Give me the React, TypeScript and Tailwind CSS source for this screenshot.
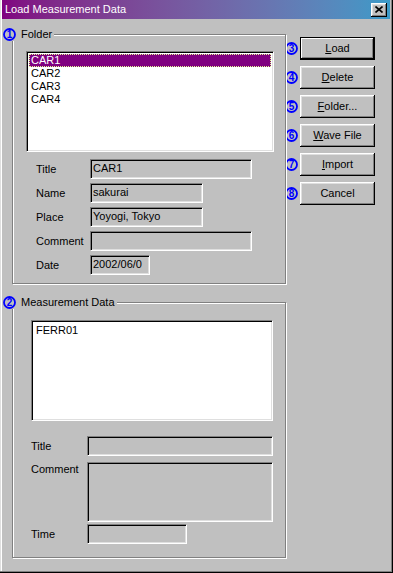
import React from "react"

const sunken =
  "border border-t-[#808080] border-l-[#808080] border-r-white border-b-white shadow-[inset_1px_1px_0_#000,inset_-1px_-1px_0_#dfdfdf]"

const raised =
  "shadow-[inset_-1px_-1px_0_#000,inset_1px_1px_0_#fff,inset_-2px_-2px_0_#808080,inset_2px_2px_0_#dfdfdf]"

function Num({ n }: { n: string }) {
  return (
    <svg width="13" height="13" viewBox="0 0 13 13" className="shrink-0 block">
      <circle cx="6.5" cy="6.5" r="5.5" fill="none" stroke="#0000ff" strokeWidth="1.8" />
      <text
        x="6.6"
        y="10.2"
        textAnchor="middle"
        fontSize="10"
        fontWeight="bold"
        fill="#0000ff"
        fontFamily="Liberation Sans, Arial, sans-serif"
      >
        {n}
      </text>
    </svg>
  )
}

function Group({
  n,
  label,
  className,
  children,
}: {
  n: string
  label: string
  className: string
  children: React.ReactNode
}) {
  return (
    <div
      className={
        "relative w-[274px] border border-[#808080] shadow-[1px_1px_0_#fff,inset_1px_1px_0_#fff] " +
        className
      }
    >
      <div className="absolute -left-[10px] -top-[7px] flex items-center gap-[5px] bg-[#c0c0c0] pr-[2px] leading-[13px]">
        <Num n={n} />
        <span>{label}</span>
      </div>
      {children}
    </div>
  )
}

function Field({
  label,
  value,
  width,
  labelWidth,
}: {
  label: string
  value?: string
  width: string
  labelWidth: string
}) {
  return (
    <div className="flex items-center h-[20px]">
      <span className={labelWidth + " shrink-0"}>{label}</span>
      <div className={"h-[20px] bg-[#c0c0c0] pl-[2px] leading-[16px] overflow-hidden whitespace-nowrap " + width + " " + sunken}>
        {value}
      </div>
    </div>
  )
}

function U({ c }: { c: string }) {
  return <span className="underline underline-offset-[1px]">{c}</span>
}

const buttons: { n: string; node: React.ReactNode; def?: boolean }[] = [
  { n: "3", node: <><U c="L" />oad</>, def: true },
  { n: "4", node: <><U c="D" />elete</> },
  { n: "5", node: <><U c="F" />older...</> },
  { n: "6", node: <><U c="W" />ave File</> },
  { n: "7", node: <><U c="I" />mport</> },
  { n: "8", node: <>Cancel</> },
]

export default function App() {
  return (
    <div className="w-[393px] h-[573px] bg-[#c0c0c0] pl-[2px] pr-[3px] overflow-hidden font-['Liberation_Sans',Arial,sans-serif] text-[11px] text-black shadow-[inset_-1px_-1px_0_#000,inset_-2px_-2px_0_#808080,inset_1px_0_0_#dfdfdf,inset_2px_0_0_#fff]">
      {/* title bar */}
      <div className="flex items-center h-[19px] bg-linear-to-r from-[#800080] to-[#3a9ac8] pl-[3px] pr-[3px]">
        <span className="text-white leading-[13px]">Load Measurement Data</span>
        <div className={"ml-auto w-[16px] h-[14px] bg-[#c0c0c0] flex items-center justify-center " + raised}>
          <svg width="8" height="7" viewBox="0 0 8 7">
            <path d="M0.5 0.5 L7.5 6.5 M7.5 0.5 L0.5 6.5" stroke="#000" strokeWidth="1.6" />
          </svg>
        </div>
      </div>

      <div className="flex">
        <div className="ml-[10px] w-[274px]">
          <Group n="1" label="Folder" className="mt-[15px] h-[250px]">
            <div className={"ml-[13px] mt-[16px] w-[248px] h-[101px] bg-white p-[2px] " + sunken}>
              <div className="h-[13px] leading-[13px] pl-[2px] bg-[#800080] text-white outline-1 outline-dotted outline-[#e0ff90] -outline-offset-1">
                CAR1
              </div>
              <div className="h-[13px] leading-[13px] pl-[2px]">CAR2</div>
              <div className="h-[13px] leading-[13px] pl-[2px]">CAR3</div>
              <div className="h-[13px] leading-[13px] pl-[2px]">CAR4</div>
            </div>
            <div className="ml-[23px] mt-[7px] flex flex-col gap-[4px]">
              <Field label="Title" value="CAR1" width="w-[162px]" labelWidth="w-[54px]" />
              <Field label="Name" value="sakurai" width="w-[113px]" labelWidth="w-[54px]" />
              <Field label="Place" value="Yoyogi, Tokyo" width="w-[113px]" labelWidth="w-[54px]" />
              <Field label="Comment" width="w-[162px]" labelWidth="w-[54px]" />
              <Field label="Date" value="2002/06/0" width="w-[60px]" labelWidth="w-[54px]" />
            </div>
          </Group>

          <Group n="2" label="Measurement Data" className="mt-[18px] h-[256px]">
            <div className={"ml-[18px] mt-[17px] w-[242px] h-[101px] bg-white p-[2px] " + sunken}>
              <div className="h-[13px] leading-[13px] pl-[2px] pt-[1px]">FERR01</div>
            </div>
            <div className="ml-[18px] mt-[15px] flex flex-col">
              <Field label="Title" width="w-[186px]" labelWidth="w-[56px]" />
              <div className="flex mt-[6px]">
                <span className="w-[56px] shrink-0 leading-[13px] mt-[1px]">Comment</span>
                <div className={"w-[186px] h-[60px] bg-[#c0c0c0] " + sunken} />
              </div>
              <div className="mt-[2px]">
                <Field label="Time" width="w-[100px]" labelWidth="w-[56px]" />
              </div>
            </div>
          </Group>
        </div>

        <div className="mt-[18px] flex flex-col gap-[6px]">
          {buttons.map((b) => (
            <div key={b.n} className="flex items-center">
              <div className="-ml-[1px] mr-[2px]">
                <Num n={b.n} />
              </div>
              <div
                className={
                  "w-[75px] h-[23px] flex items-center justify-center bg-[#c0c0c0] " +
                  (b.def
                    ? "border border-black shadow-[inset_-1px_-1px_0_#000,inset_1px_1px_0_#fff,inset_-2px_-2px_0_#808080]"
                    : raised)
                }
              >
                <span className="leading-[13px]">{b.node}</span>
              </div>
            </div>
          ))}
        </div>
      </div>
    </div>
  )
}
